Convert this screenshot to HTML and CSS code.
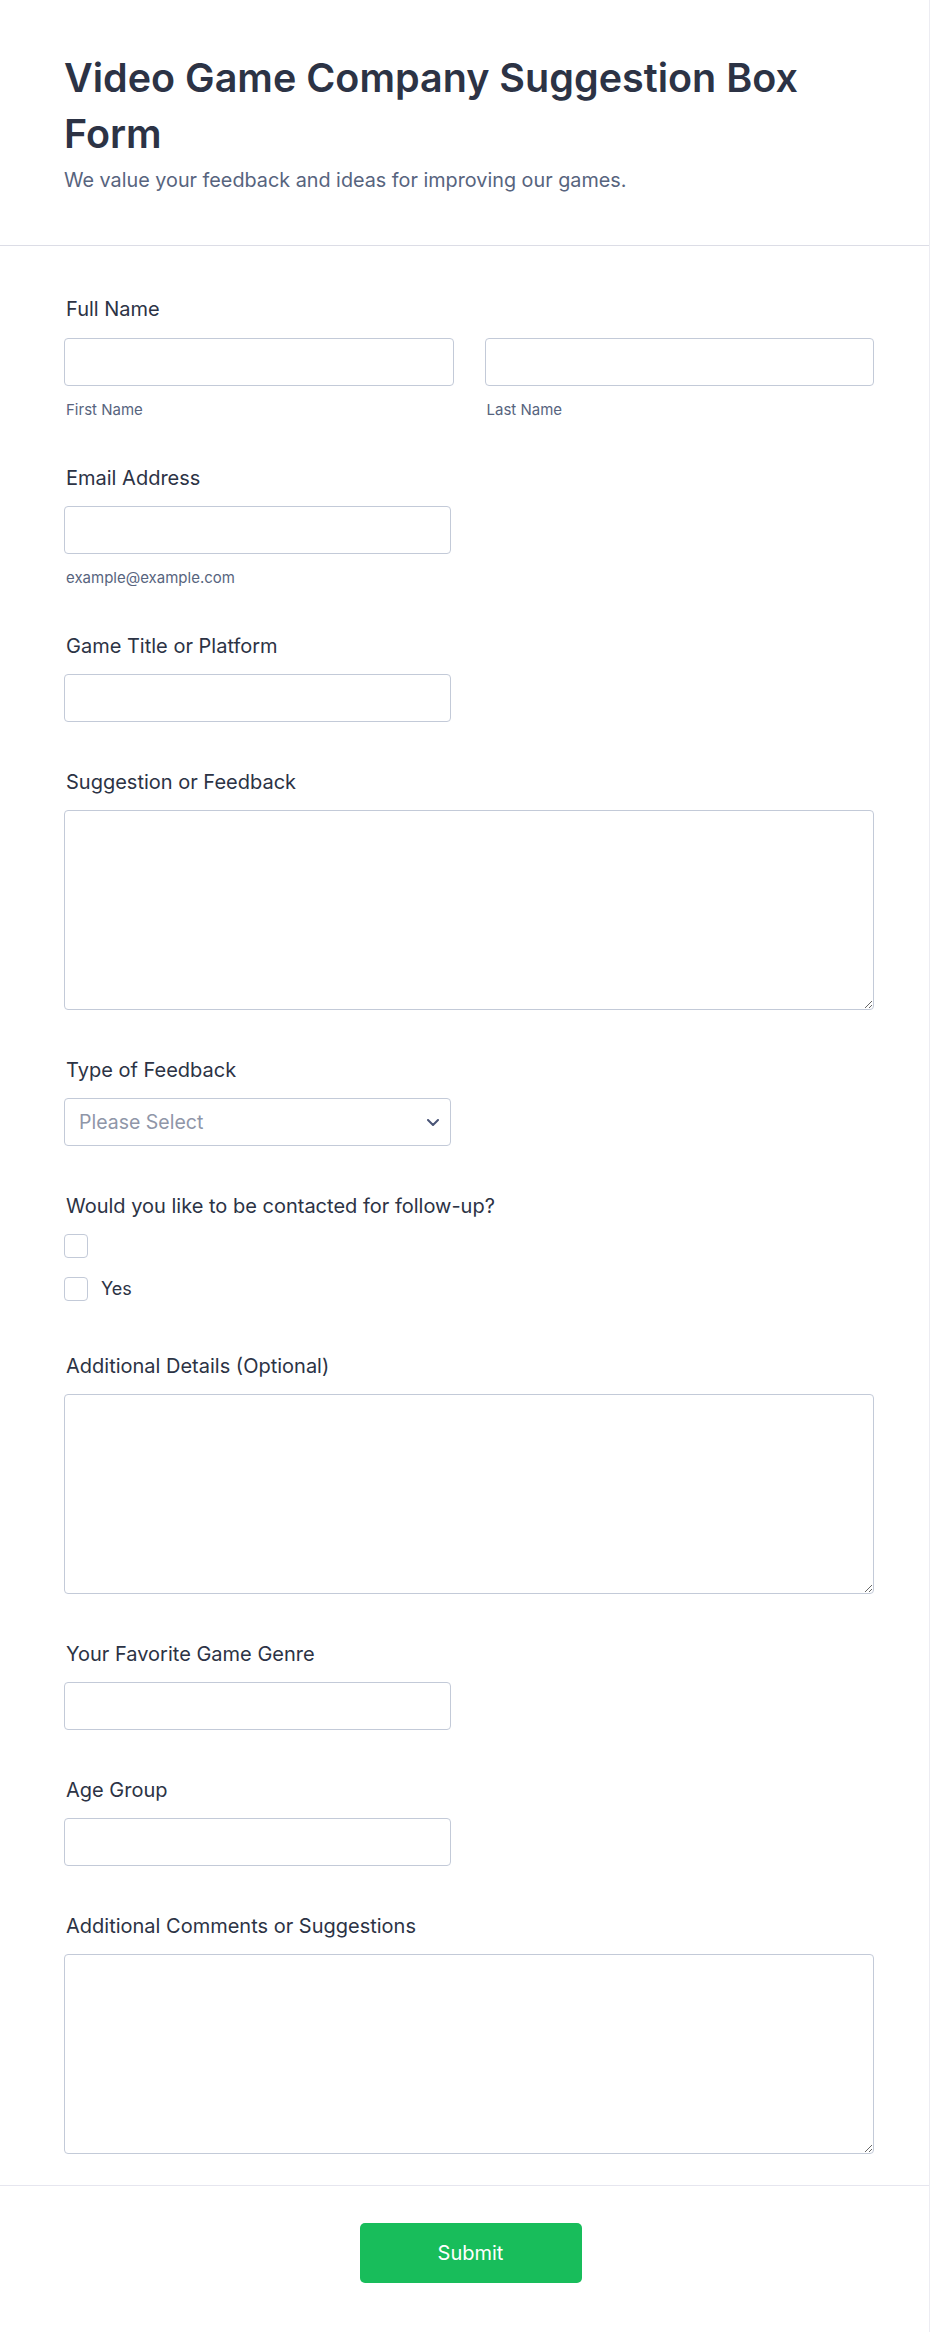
FILE: index.html
```html
<!DOCTYPE html>
<html lang="en">
<head>
<meta charset="utf-8">
<title>Video Game Company Suggestion Box Form</title>
<link rel="stylesheet" href="styles.css">
</head>
<body>
<div class="page">
  <header class="form-header">
    <h1 class="form-title">Video Game Company Suggestion Box Form</h1>
    <p class="form-subtitle">We value your feedback and ideas for improving our games.</p>
  </header>

  <main class="form-body">
    <div class="field field-sub">
      <label class="field-label">Full Name</label>
      <div class="name-row">
        <div class="name-col">
          <input class="input" type="text">
          <span class="sublabel">First Name</span>
        </div>
        <div class="name-col">
          <input class="input" type="text">
          <span class="sublabel">Last Name</span>
        </div>
      </div>
    </div>

    <div class="field field-sub">
      <label class="field-label">Email Address</label>
      <input class="input input-half" type="email">
      <span class="sublabel">example@example.com</span>
    </div>

    <div class="field">
      <label class="field-label">Game Title or Platform</label>
      <input class="input input-half" type="text">
    </div>

    <div class="field">
      <label class="field-label">Suggestion or Feedback</label>
      <textarea class="textarea"></textarea>
    </div>

    <div class="field">
      <label class="field-label">Type of Feedback</label>
      <div class="select-wrap">
        <select class="select">
          <option>Please Select</option>
        </select>
        <svg class="chevron" width="12" height="7" viewBox="0 0 12 7"><path d="M1 1l5 5 5-5" fill="none" stroke="#4a5577" stroke-width="2" stroke-linecap="round" stroke-linejoin="round"/></svg>
      </div>
    </div>

    <div class="field field-check">
      <label class="field-label">Would you like to be contacted for follow-up?</label>
      <div class="check-list">
        <label class="check-row"><span class="checkbox"></span></label>
        <label class="check-row"><span class="checkbox"></span><span class="check-text">Yes</span></label>
      </div>
    </div>

    <div class="field">
      <label class="field-label">Additional Details (Optional)</label>
      <textarea class="textarea"></textarea>
    </div>

    <div class="field">
      <label class="field-label">Your Favorite Game Genre</label>
      <input class="input input-half" type="text">
    </div>

    <div class="field">
      <label class="field-label">Age Group</label>
      <input class="input input-half" type="text">
    </div>

    <div class="field">
      <label class="field-label">Additional Comments or Suggestions</label>
      <textarea class="textarea"></textarea>
    </div>
  </main>

  <footer class="form-footer">
    <button class="submit" type="button">Submit</button>
  </footer>
</div>
</body>
</html>
```

FILE: styles.css
```css
* { box-sizing: border-box; }

html, body {
  margin: 0;
  padding: 0;
  background: #ffffff;
}

body {
  font-family: Inter, "Noto Sans", sans-serif;
  color: #2c3345;
}

.page {
  width: 930px;
  min-height: 2332px;
  border-right: 1px solid #ececf2;
  background: #ffffff;
}

.form-header {
  padding: 50px 64px 50px 64px;
  border-bottom: 1px solid #dcdde6;
}

.form-title {
  margin: 0;
  font-size: 39.5px;
  line-height: 56px;
  font-weight: 600;
  color: #2c3345;
}

.form-subtitle {
  margin: 3px 0 0 0;
  font-size: 19.8px;
  line-height: 30px;
  color: #57647e;
}

.form-body {
  padding: 26px 55px 8px 64px;
}

.field {
  padding: 22px 0 23px 0;
  display: flex;
  flex-direction: column;
  align-items: flex-start;
}

.field-sub {
  padding-bottom: 20px;
}

.field-check {
  padding-bottom: 28px;
}

.field-label {
  display: block;
  font-size: 20px;
  line-height: 30px;
  font-weight: 400;
  color: #2c3345;
  padding-left: 2px;
  margin-bottom: 13px;
}

.name-row {
  display: flex;
  gap: 31px;
  width: 100%;
  margin-top: 1px;
}

.name-col {
  flex: 1;
  display: flex;
  flex-direction: column;
}

.input {
  display: block;
  width: 100%;
  height: 48px;
  border: 1px solid #c3cad8;
  border-radius: 4px;
  background: #fff;
  font-family: inherit;
  font-size: 18px;
  padding: 0 14px;
  outline: none;
}

.input-half {
  width: calc(50% - 18px);
}

.sublabel {
  display: block;
  margin-top: 13px;
  font-size: 15px;
  line-height: 22px;
  color: #57647e;
  padding-left: 2px;
}

.textarea {
  display: block;
  width: 100%;
  height: 200px;
  border: 1px solid #c3cad8;
  border-radius: 4px;
  background: #fff;
  font-family: inherit;
  font-size: 18px;
  padding: 10px 14px;
  outline: none;
}

.select-wrap {
  position: relative;
  width: calc(50% - 18px);
}

.select {
  display: block;
  width: 100%;
  height: 48px;
  border: 1px solid #c3cad8;
  border-radius: 4px;
  background: #fff;
  font-family: inherit;
  font-size: 19.5px;
  color: #8f96a8;
  padding: 0 14px;
  appearance: none;
  -webkit-appearance: none;
  outline: none;
}

.chevron {
  position: absolute;
  right: 12px;
  top: 21px;
  pointer-events: none;
}

.check-list {
  display: flex;
  flex-direction: column;
  gap: 19px;
}

.check-row {
  display: flex;
  align-items: center;
  gap: 13px;
  height: 24px;
}

.checkbox {
  display: block;
  width: 24px;
  height: 24px;
  border: 1px solid #c3cad8;
  border-radius: 4px;
  background: #fff;
}

.check-text {
  font-size: 18px;
  line-height: 24px;
  color: #2c3345;
}

.form-footer {
  border-top: 1px solid #e6e6ef;
  padding: 37px 52px 49px 64px;
  display: flex;
  justify-content: center;
}

.submit {
  width: 222px;
  height: 60px;
  border: none;
  border-radius: 5px;
  background: #18bd5b;
  color: #ffffff;
  font-family: inherit;
  font-size: 20px;
  font-weight: 400;
  cursor: pointer;
}
```
